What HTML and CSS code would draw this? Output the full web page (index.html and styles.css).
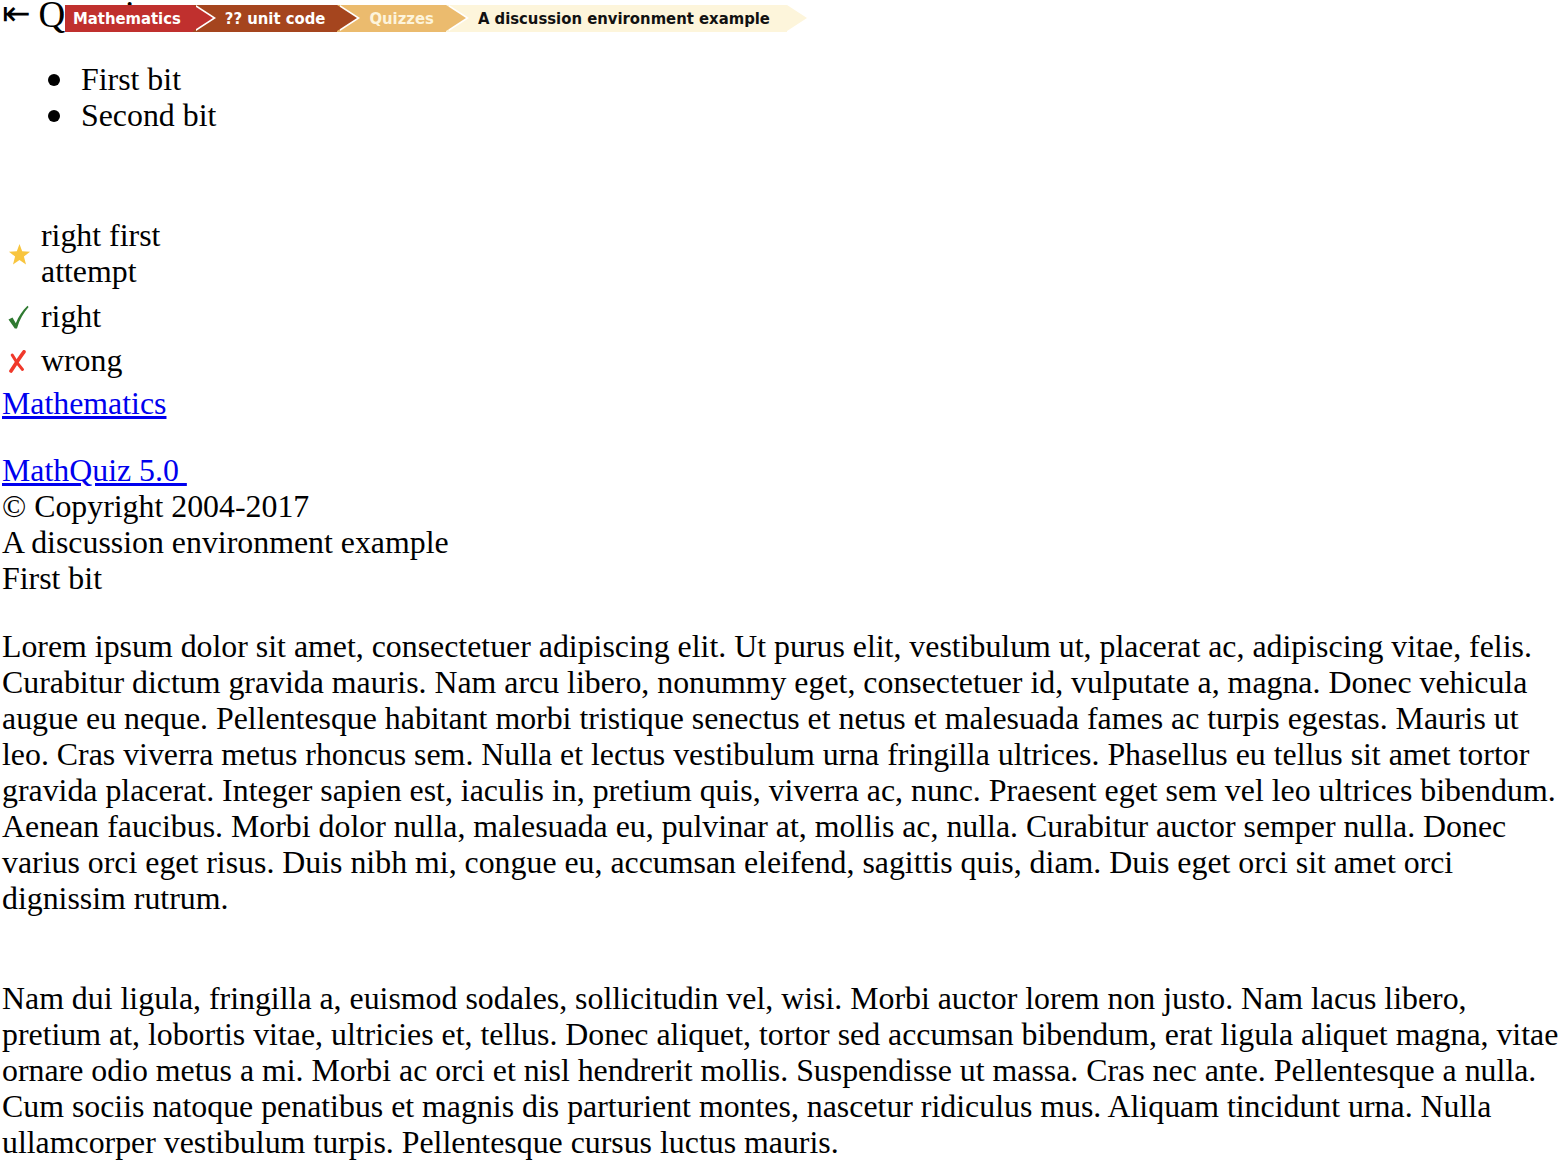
FILE: index.html
```html
<!DOCTYPE html>
<html lang="en">
<head>
<meta charset="utf-8">
<title>A discussion environment example</title>
<link rel="stylesheet" href="styles.css">
</head>
<body>
<div class="title"><span class="back">&#8676;</span> <span class="qtitle">Questions</span></div>
<ul class="crumbs">
  <li class="c1">Mathematics</li>
  <li class="c2">?? unit code</li>
  <li class="c3">Quizzes</li>
  <li class="c4">A discussion environment example</li>
</ul>

<ul class="bits">
  <li>First bit</li>
  <li>Second bit</li>
</ul>

<div class="legend">
  <div class="row row1">
    <span class="icon"><svg width="23" height="23" viewBox="0 0 24 24"><polygon points="12,1 14.8,8.6 23,9 16.6,14.2 18.8,22.4 12,17.8 5.2,22.4 7.4,14.2 1,9 9.2,8.6" fill="#f8c53f"/></svg></span>
    <span class="label">right first attempt</span>
  </div>
  <div class="row row2">
    <span class="icon"><svg width="21" height="24" viewBox="0 0 21 24"><path d="M0.5 14.5 L4.5 12.5 L7.8 18.2 C10.5 11.5 14.5 5.5 19.5 0.8 L20.6 2 C15.6 7.5 11.5 14.5 9 23.5 L6.8 23.5 Z" fill="#2f7a31"/></svg></span>
    <span class="label">right</span>
  </div>
  <div class="row row3">
    <span class="icon"><svg width="19" height="23" viewBox="0 0 19 23"><path d="M16 1.8 C12 7 7.5 14 3 21" stroke="#f0392b" stroke-width="3.6" stroke-linecap="round" fill="none"/><path d="M4.2 5 C7 10 10 14.5 14.5 19.5" stroke="#f0392b" stroke-width="3" stroke-linecap="round" fill="none"/></svg></span>
    <span class="label">wrong</span>
  </div>
</div>

<a class="link home" href="#">Mathematics</a>

<div class="footer">
  <a class="link" href="#">MathQuiz 5.0&nbsp;</a><br>
  &copy; Copyright 2004-2017<br>
  A discussion environment example<br>
  First bit
</div>

<p class="para">Lorem ipsum dolor sit amet, consectetuer adipiscing elit. Ut purus elit, vestibulum ut, placerat ac, adipiscing vitae, felis. Curabitur dictum gravida mauris. Nam arcu libero, nonummy eget, consectetuer id, vulputate a, magna. Donec vehicula augue eu neque. Pellentesque habitant morbi tristique senectus et netus et malesuada fames ac turpis egestas. Mauris ut leo. Cras viverra metus rhoncus sem. Nulla et lectus vestibulum urna fringilla ultrices. Phasellus eu tellus sit amet tortor gravida placerat. Integer sapien est, iaculis in, pretium quis, viverra ac, nunc. Praesent eget sem vel leo ultrices bibendum. Aenean faucibus. Morbi dolor nulla, malesuada eu, pulvinar at, mollis ac, nulla. Curabitur auctor semper nulla. Donec varius orci eget risus. Duis nibh mi, congue eu, accumsan eleifend, sagittis quis, diam. Duis eget orci sit amet orci dignissim rutrum.</p>

<p class="para para2">Nam dui ligula, fringilla a, euismod sodales, sollicitudin vel, wisi. Morbi auctor lorem non justo. Nam lacus libero, pretium at, lobortis vitae, ultricies et, tellus. Donec aliquet, tortor sed accumsan bibendum, erat ligula aliquet magna, vitae ornare odio metus a mi. Morbi ac orci et nisl hendrerit mollis. Suspendisse ut massa. Cras nec ante. Pellentesque a nulla. Cum sociis natoque penatibus et magnis dis parturient montes, nascetur ridiculus mus. Aliquam tincidunt urna. Nulla ullamcorper vestibulum turpis. Pellentesque cursus luctus mauris.</p>
</body>
</html>
```

FILE: styles.css
```css
html, body {
  background: #fff;
}
body {
  margin: 0;
  padding: 0 0 0 2px;
  font-family: "Liberation Serif", "Times New Roman", serif;
  font-size: 31.85px;
  line-height: 36px;
  color: #000;
}

.title {
  height: 30px;
  line-height: 30px;
  white-space: nowrap;
  overflow: visible;
}
.back {
  font-family: "DejaVu Sans", sans-serif;
  font-size: 34px;
  line-height: 0;
  vertical-align: 2px;
}
.qtitle {
  font-size: 37px;
  line-height: 30px;
}

.crumbs {
  position: absolute;
  top: 5px;
  left: 65px;
  display: flex;
  margin: 0;
  padding: 0;
  list-style: none;
  font-family: "DejaVu Sans Condensed", "DejaVu Sans", sans-serif;
  font-stretch: condensed;
  font-weight: bold;
  font-size: 16.5px;
}
.crumbs li {
  position: relative;
  height: 27px;
  line-height: 27px;
  padding: 0 12px 0 32px;
  color: #fff;
  white-space: nowrap;
}
.crumbs li:first-child {
  padding-left: 8px;
}
.crumbs li::before,
.crumbs li::after {
  content: "";
  position: absolute;
  top: 0;
  width: 0;
  height: 0;
  border-top: 13.5px solid transparent;
  border-bottom: 13.5px solid transparent;
  border-left: 20px solid #fff;
}
.crumbs li::before {
  left: calc(100% + 3px);
  z-index: 1;
}
.crumbs li::after {
  left: 100%;
  z-index: 2;
}
.crumbs .c1 { background: #c0302e; }
.crumbs .c1::after { border-left-color: #c0302e; }
.crumbs .c2 { background: #a5451e; }
.crumbs .c2::after { border-left-color: #a5451e; }
.crumbs .c3 { background: #ebbb6e; color: #fdf4dc; }
.crumbs .c3::after { border-left-color: #ebbb6e; }
.crumbs .c4 { background: #fdf5db; color: #111; padding-right: 17px; }
.crumbs .c4::after { border-left-color: #fdf5db; }
.crumbs .c4::before { display: none; }

.bits {
  margin: 32px 0 0 0;
  padding: 0 0 0 79px;
  list-style: none;
}
.bits li::before {
  content: "";
  display: inline-block;
  width: 12px;
  height: 12px;
  border-radius: 50%;
  background: #000;
  margin-left: -33px;
  margin-right: 21px;
  vertical-align: 4px;
}

.legend {
  margin-top: 84px;
  display: flex;
  flex-direction: column;
}
.row {
  display: flex;
  align-items: center;
}
.row2 { margin-top: 9px; }
.row3 { margin-top: 8px; }
.icon {
  width: 39px;
  padding-left: 6px;
  box-sizing: border-box;
  display: flex;
  align-items: center;
}
.label {
  width: 130px;
}

.link {
  color: #0000ee;
  text-decoration: underline;
}
.home {
  display: inline-block;
  margin-top: 7px;
}

.footer {
  margin-top: 31px;
}

.para {
  margin: 32px -2px 0 0;
}
.para2 {
  margin-top: 64px;
}
```
